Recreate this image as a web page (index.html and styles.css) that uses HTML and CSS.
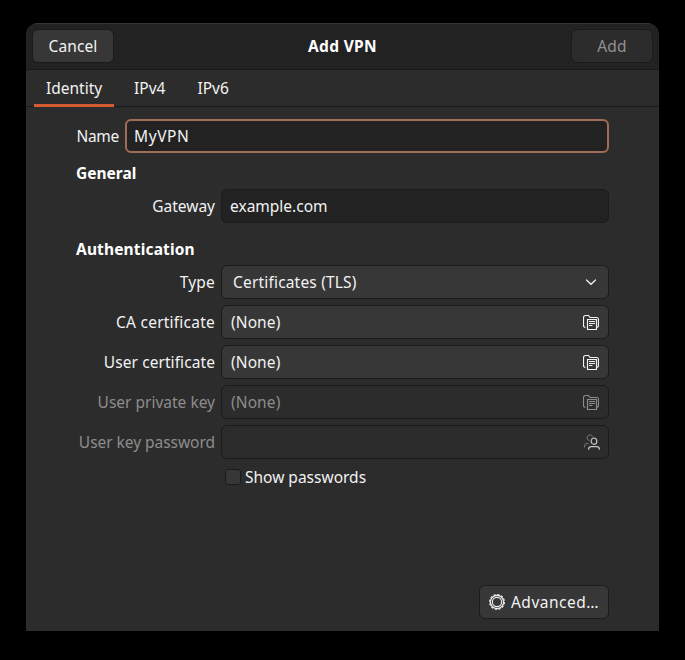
FILE: index.html
```html
<!DOCTYPE html>
<html lang="en">
<head>
<meta charset="utf-8">
<title>Add VPN</title>
<link rel="stylesheet" href="styles.css">
</head>
<body>
<svg width="0" height="0" class="defs">
  <symbol id="files" viewBox="0 0 16 16">
    <path d="M2.500 13.500a2 2 0 0 1-2-2v-8a2 2 0 0 1 2-2h3l1.500 2h6.500a2 2 0 0 1 2 2v6a2 2 0 0 1-2 2M4.500 5.500h9v10h-9zM6 7.500h6M6 9.500h6M6 11.500h3.500" fill="none" stroke="currentColor" stroke-width="1.150"/>
  </symbol>
</svg>
<main class="dialog">
  <header class="header">
    <button class="button"><span class="t-cancel">Cancel</span></button>
    <h1 class="title"><span class="t-title">Add VPN</span></h1>
    <button class="button off" disabled><span class="t-add">Add</span></button>
  </header>
  <nav class="tabs">
    <a class="tab active"><span>Identity</span></a>
    <a class="tab"><span>IPv4</span></a>
    <a class="tab"><span>IPv6</span></a>
  </nav>
  <section class="page">
    <div class="row name-row">
      <label class="label"><span class="t-name">Name</span></label>
      <div class="field entry focused"><span class="t-myvpn">MyVPN</span></div>
    </div>
    <h2 class="section"><span>General</span></h2>
    <div class="row">
      <label class="label"><span>Gateway</span></label>
      <div class="field entry"><span>example.com</span></div>
    </div>
    <h2 class="section auth"><span class="t-auth">Authentication</span></h2>
    <div class="rows">
      <div class="row">
        <label class="label"><span class="t-type">Type</span></label>
        <div class="field combo"><span class="t-tls">Certificates (TLS)</span>
          <svg class="icon" viewBox="0 0 16 16"><path d="M3.500 6l4.500 4.300L12.500 6" fill="none" stroke="currentColor" stroke-width="1.200" stroke-linecap="round"/></svg>
        </div>
      </div>
      <div class="row">
        <label class="label"><span class="t-ca">CA certificate</span></label>
        <div class="field"><span class="t-none">(None)</span><svg class="icon"><use href="#files"/></svg></div>
      </div>
      <div class="row">
        <label class="label"><span class="t-usercert">User certificate</span></label>
        <div class="field"><span class="t-none">(None)</span><svg class="icon"><use href="#files"/></svg></div>
      </div>
      <div class="row disabled">
        <label class="label"><span>User private key</span></label>
        <div class="field"><span class="t-none">(None)</span><svg class="icon"><use href="#files"/></svg></div>
      </div>
      <div class="row disabled">
        <label class="label"><span class="t-pass">User key password</span></label>
        <div class="field people"><span></span>
          <svg class="icon" viewBox="0 0 16 16" fill="none" stroke="currentColor">
            <path d="M5.500 6.600A2.900 2.900 0 1 1 8.700 2.600M.6 13.500v-1.500a2.500 2.500 0 0 1 2.500-2.500h1.400" opacity=".8"/>
            <ellipse cx="10" cy="7.200" rx="2.800" ry="3.200" stroke="#c4c4c4" stroke-width="1.200"/>
            <path d="M4.600 15.800v-.5a2.800 2.800 0 0 1 2.800-2.700h5.200a2.800 2.800 0 0 1 2.800 2.700v.5" stroke="#c4c4c4" stroke-width="1.200"/>
          </svg>
        </div>
      </div>
    </div>
    <label class="check"><span class="box"></span><span>Show passwords</span></label>
    <footer class="footer">
      <button class="button advanced">
        <svg class="icon" viewBox="0 0 16 16" fill="none" stroke="currentColor">
          <circle cx="8" cy="8" r="4.600" stroke-width="1.100"/>
          <circle cx="8" cy="8" r="6.600" stroke-width="1.200"/>
          <circle cx="8" cy="8" r="7.350" stroke-width="1.200" stroke-dasharray="2.300 1.548"/>
        </svg>
        <span class="t-adv">Advanced…</span>
      </button>
    </footer>
  </section>
</main>
</body>
</html>
```
FILE: styles.css
```css
* { box-sizing: border-box; }
body {
  margin: 0;
  height: 660px;
  padding: 23px 26px 29px;
  overflow: hidden;
  background: #000;
  color: #f2f2f2;
  font: 15.5px/22px "Noto Sans", sans-serif;
}
.defs { position: absolute; }
span { white-space: nowrap; }
.dialog {
  display: flex;
  flex-direction: column;
  width: 633px;
  height: 608px;
  border-radius: 12px 12px 0 0;
  background: #2c2c2c;
  overflow: hidden;
}
.header {
  display: flex;
  align-items: center;
  justify-content: space-between;
  height: 47px;
  padding: 0 6px 1px;
  background: #222;
  border-bottom: 1px solid #191919;
  box-shadow: inset 0 1px #353535;
}
.title { margin: 0; font-size: 15.5px; color: #fff; }
.button {
  display: flex;
  align-items: center;
  justify-content: center;
  width: 82px;
  height: 34px;
  padding: 0;
  border: 1px solid #1b1b1b;
  border-radius: 6px;
  background: #373737;
  color: #f2f2f2;
  font: inherit;
}
.off { background: #2c2c2c; color: #919191; }
.tabs {
  display: flex;
  gap: 8px;
  height: 37px;
  padding: 0 8px;
  border-bottom: 1px solid #1b1b1b;
}
.tab {
  height: 37px;
  padding: 7px 12px 0;
}
.tab.active { width: 80px; border-bottom: 3px solid #d45b30; }
.page {
  display: flex;
  flex-direction: column;
  flex: 1;
  padding: 12px 50px;
}
.row { display: flex; align-items: center; gap: 6px; }
.label { width: 139px; text-align: right; }
.name-row .label { width: 43px; }
.field {
  display: flex;
  align-items: center;
  justify-content: space-between;
  flex: 1;
  height: 34px;
  padding: 0 9px;
  border: 1px solid #1b1b1b;
  border-radius: 6px;
  background: #373737;
}
.entry { padding: 0 8px; background: #222; }
.focused { padding: 0 7px; border: 2px solid #a16d59; }
.combo { padding-left: 11px; }
.section {
  margin: 9px 0 5px;
  color: #fff;
  font-size: 15.5px;
  line-height: 22px;
}
.auth { margin: 15px 0 5px; }
.rows { display: flex; flex-direction: column; gap: 6px; }
.disabled { color: #8c8c8c; }
.disabled .field { background: #2c2c2c; }
.people { padding-right: 8px; }
.icon { width: 16px; height: 16px; flex: none; }
.check {
  display: flex;
  align-items: center;
  gap: 4px;
  margin: 7px 0 0 149px;
}
.box {
  width: 16px;
  height: 16px;
  border: 1px solid #1b1b1b;
  border-radius: 3px;
  background: #373737;
}
.footer {
  display: flex;
  justify-content: flex-end;
  margin-top: auto;
}
.advanced { width: 130px; gap: 6px; }

/* Per-string tracking */
.t-cancel { letter-spacing: 0.1px; }
.t-title { letter-spacing: 0.35px; }
.t-add { letter-spacing: 0.2px; }
.t-name { letter-spacing: -0.3px; }
.t-myvpn { letter-spacing: 0.6px; }
.t-auth { letter-spacing: 0.15px; }
.t-type { letter-spacing: 0.2px; }
.t-tls { letter-spacing: 0.18px; }
.t-ca { letter-spacing: 0.23px; }
.t-usercert { letter-spacing: 0.08px; }
.t-none { letter-spacing: 0.1px; }
.t-pass { letter-spacing: -0.04px; }
.t-adv { letter-spacing: 0.5px; }
```
